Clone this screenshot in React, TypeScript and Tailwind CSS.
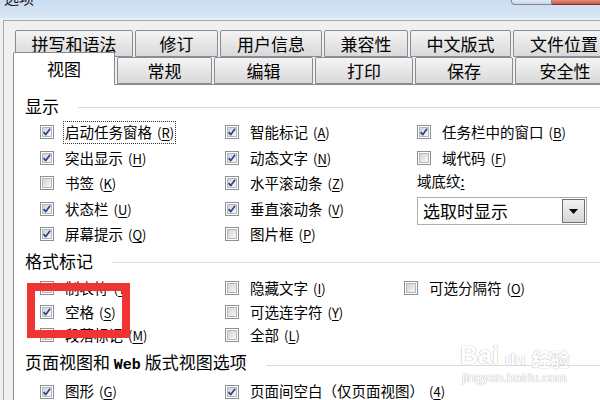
import React from "react";

const FONT = "font-['Noto_Sans_CJK_SC','Noto_Sans',sans-serif]";

function Box({ checked }: { checked?: boolean }) {
  return (
    <span className="relative inline-flex w-[14px] h-[14px] shrink-0 border border-[#8e8f8f] bg-white p-px">
      <span className="block w-full h-full border border-[#b4b8bd] bg-gradient-to-br from-[#d0d4d9] to-[#f7f7f7]" />
      {checked && (
        <svg viewBox="0 0 14 14" className="absolute inset-0 w-[12px] h-[12px]">
          <path d="M3 7.2 L5.6 10 L10.6 3.2" fill="none" stroke="#2b3f8f" strokeWidth="1.9" strokeLinejoin="round" />
        </svg>
      )}
    </span>
  );
}

function Acc({ k }: { k: string }) {
  return (
    <span className="ml-[5px] text-[13px]">
      (<span className="underline underline-offset-2">{k}</span>)
    </span>
  );
}

function Item({ label, k, checked, focus }: { label: string; k?: string; checked?: boolean; focus?: boolean }) {
  return (
    <div className="flex items-center gap-[10px] h-full">
      <Box checked={checked} />
      <span className={`whitespace-nowrap leading-none px-[1px] py-[3px] ${focus ? "outline outline-1 outline-dotted outline-[#333]" : ""}`}>
        {label}
        {k && <Acc k={k} />}
      </span>
    </div>
  );
}

function Header({ text }: { text: React.ReactNode }) {
  return (
    <div className="flex items-center pl-[11px] text-[17px] text-black">
      <span className="whitespace-nowrap">{text}</span>
      <div className="flex-1 h-px bg-[#d5dde5] ml-[19px] mt-[4px]" />
    </div>
  );
}

function Tab({ label, w, selected }: { label: string; w: number; selected?: boolean }) {
  return (
    <div
      style={{ width: w }}
      className={
        selected
          ? "h-[33px] -mb-px shrink-0 bg-white border border-b-0 border-[#898c95] rounded-t-[2px] flex items-center justify-center text-[17px] relative z-10"
          : "h-[27px] shrink-0 bg-gradient-to-b from-[#f4f4f4] to-[#d9d9d9] border border-[#898c95] rounded-t-[2px] flex items-center justify-center text-[17px]"
      }
    >
      {label}
    </div>
  );
}

export default function App() {
  const row1: [string, number][] = [
    ["拼写和语法", 118],
    ["修订", 83],
    ["用户信息", 102],
    ["兼容性", 84],
    ["中文版式", 101],
    ["文件位置", 102],
  ];
  const row2: [string, number][] = [
    ["常规", 95],
    ["编辑", 99],
    ["打印", 98],
    ["保存", 98],
    ["安全性", 100],
  ];

  return (
    <div className={`w-[600px] h-[400px] overflow-hidden bg-[#f0f0f0] relative text-black ${FONT}`}>
      {/* title bar */}
      <div className="h-[18px] bg-gradient-to-b from-[#c9dcf1] to-[#d9e7f6] flex overflow-hidden">
        <span className="ml-[4px] -mt-[13px] text-[15px] text-[#1a1a1a]">选项</span>
        <div className="ml-auto flex h-[5px]">
          <div className="w-[41px] border border-t-0 border-[#7d8a99] rounded-bl-[4px] bg-gradient-to-b from-[#e3ebf4] to-[#c8d4e2]" />
          <div className="w-[48px] border-b border-[#7a3a2e] bg-gradient-to-b from-[#e0907c] to-[#c8553e]" />
        </div>
      </div>
      <div className="h-[2px] bg-[#e9eef3]" />

      {/* dialog frame */}
      <div className="ml-[3px] border-t border-l border-[#a5a9ae] pt-[9px] pl-[11px] h-[380px] flex flex-col">
        <div className="flex gap-[2px] h-[27px]">
          {row1.map(([l, w]) => (
            <Tab key={l} label={l} w={w} />
          ))}
        </div>
        <div className="flex items-end gap-[2px] -mt-[5px] -ml-[2px] h-[32px] relative z-10">
          <Tab label="视图" w={102} selected />
          {row2.map(([l, w]) => (
            <Tab key={l} label={l} w={w} />
          ))}
        </div>

        {/* panel */}
        <div className="-ml-[2px] flex-1 bg-white border-l border-t border-[#898c95] text-[14.5px] pt-[8px]">
          <Header text="显示" />
          <div className="grid grid-cols-[185px_192px_1fr] pl-[26px] pt-[1px] auto-rows-[25.5px]">
            <Item label="启动任务窗格" k="R" checked focus />
            <Item label="智能标记" k="A" checked />
            <Item label="任务栏中的窗口" k="B" checked />

            <Item label="突出显示" k="H" checked />
            <Item label="动态文字" k="N" checked />
            <Item label="域代码" k="F" />

            <Item label="书签" k="K" />
            <Item label="水平滚动条" k="Z" checked />
            <div className="flex items-center -mt-[5px] whitespace-nowrap">
              域底纹<span className="underline underline-offset-2">:</span>
            </div>

            <Item label="状态栏" k="U" checked />
            <Item label="垂直滚动条" k="V" checked />
            <div className="row-span-2 pt-[1px]">
              <div className="w-[170px] h-[28px] border border-[#abadb3] bg-white flex items-center pl-[5px] pr-[1px]">
                <span className="flex-1 text-[17px] whitespace-nowrap">选取时显示</span>
                <div className="w-[23px] h-[24px] border border-[#707070] bg-gradient-to-b from-[#f2f2f2] to-[#d6d6d6] flex items-center justify-center">
                  <svg viewBox="0 0 9 5" className="w-[9px] h-[5px]">
                    <path d="M0 0 H9 L4.5 5 Z" fill="#000" />
                  </svg>
                </div>
              </div>
            </div>

            <Item label="屏幕提示" k="Q" checked />
            <Item label="图片框" k="P" />
          </div>

          <div className="mt-[1px]">
            <Header text="格式标记" />
          </div>
          <div className="grid grid-cols-[185px_179px_1fr] pl-[26px] pt-[3px] auto-rows-[23.5px]">
            <Item label="制表符" k="T" />
            <Item label="隐藏文字" k="I" />
            <Item label="可选分隔符" k="O" />
            <Item label="空格" k="S" checked />
            <Item label="可选连字符" k="Y" />
            <div />
            <Item label="段落标记" k="M" checked />
            <Item label="全部" k="L" />
            <div />
          </div>

          <div className="mt-[2px]">
            <Header
              text={
                <>
                  页面视图和 <span className="font-['Liberation_Mono',monospace] font-bold text-[15px]">Web</span> 版式视图选项
                </>
              }
            />
          </div>
          <div className="grid grid-cols-[185px_1fr] pl-[26px] pt-[2px] auto-rows-[24px]">
            <Item label="图形" k="G" checked />
            <Item label="页面间空白（仅页面视图）" k="4" checked />
          </div>
        </div>
      </div>

      {/* red annotation box */}
      <div className="absolute left-[27px] top-[283px] w-[103px] h-[55px] border-[8px] border-[#f03333]" />

      {/* watermark */}
      <div className="absolute left-[460px] top-[343px] flex items-end text-white font-['Liberation_Sans',sans-serif] font-bold [text-shadow:0_0_1px_#b8b8b8,0_0_1px_#b8b8b8]">
        <span className="text-[25px] leading-none">Bai</span>
        <span className="text-[17px] leading-none mx-[3px] px-[3px] rounded-full">du</span>
        <span className={`text-[19px] leading-none ${FONT}`}>经验</span>
      </div>
      <div className="absolute left-[462px] top-[371px] text-[13px] leading-none text-white font-['Liberation_Sans',sans-serif] [text-shadow:0_0_1px_#b8b8b8,0_0_1px_#b8b8b8]">
        jingyan.baidu.com
      </div>
    </div>
  );
}
